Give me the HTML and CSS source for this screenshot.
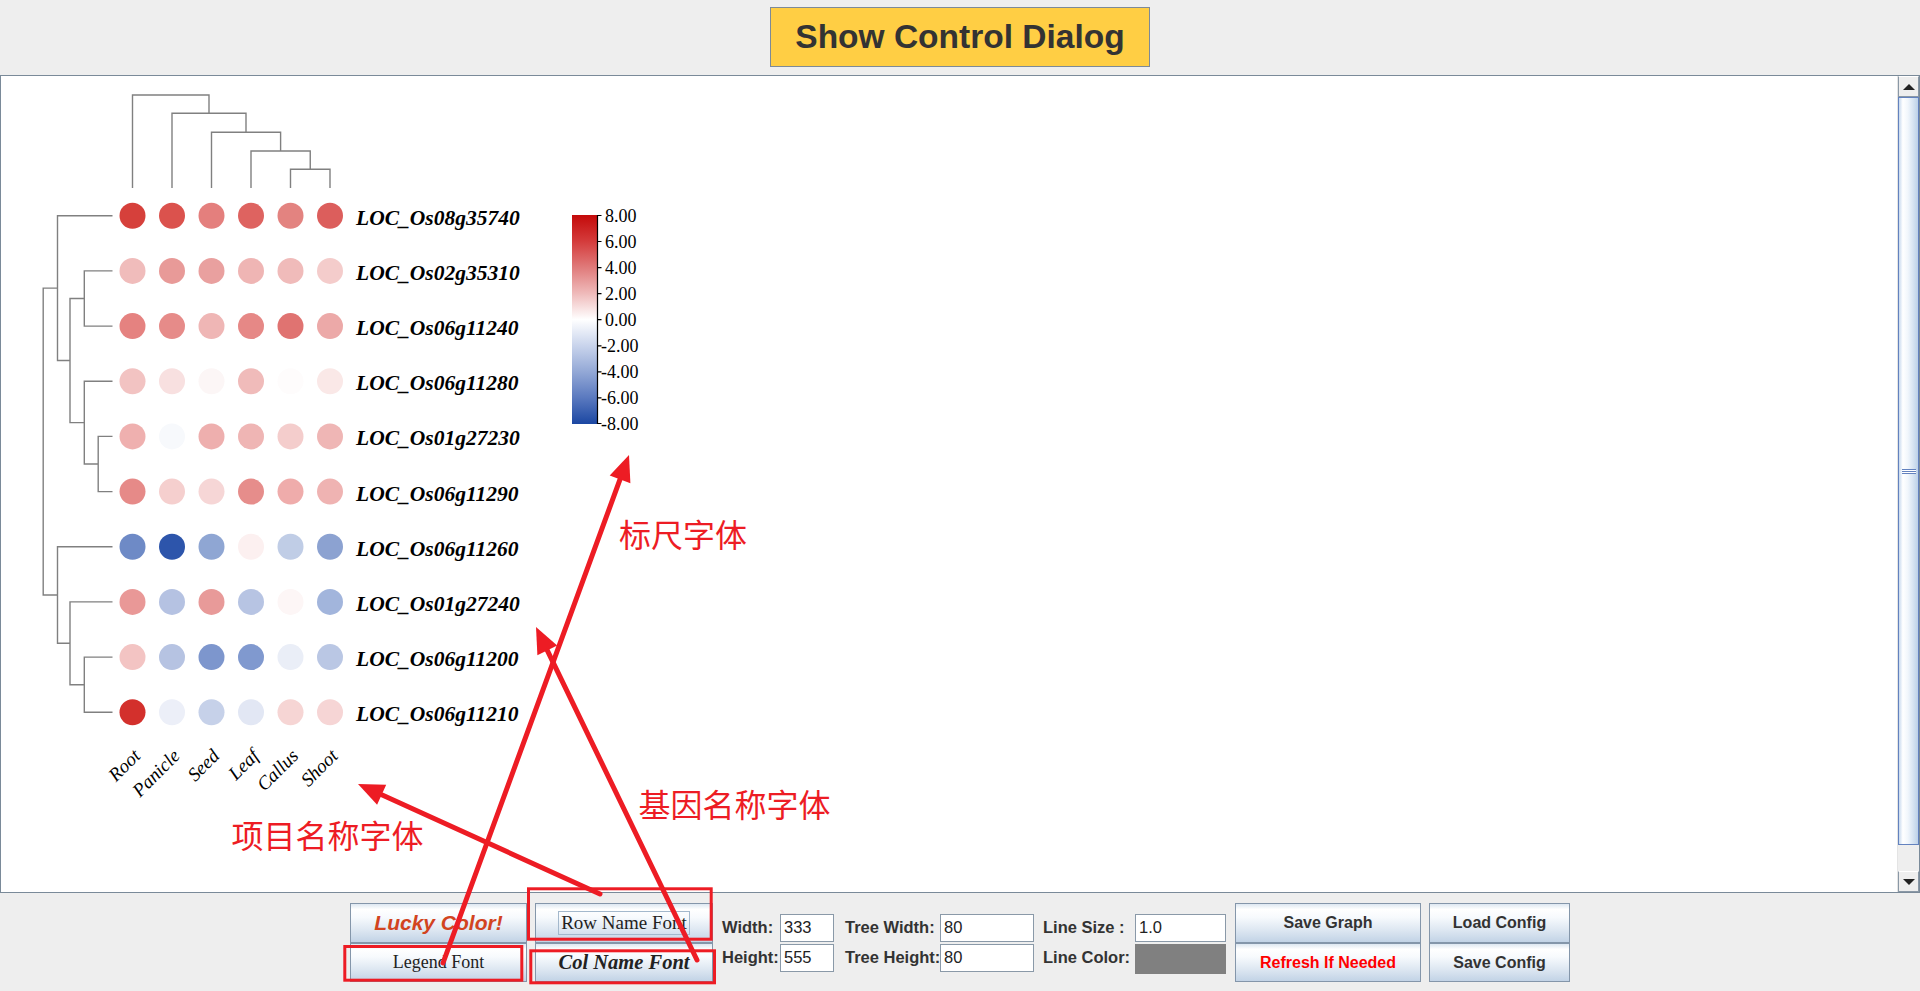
FILE: index.html
```html
<!DOCTYPE html>
<html>
<head>
<meta charset="utf-8">
<link rel="stylesheet" href="styles.css">
</head>
<body>
<div class="app">
  <div class="topbar">
    <button class="show-btn">Show Control Dialog</button>
  </div>

  <div class="panel">
    <div class="canvas">
      <svg class="plot" width="700" height="780" viewBox="1 76 700 780">
        <g class="tree">
          <path d="M132.5 188V95H209V113.3M172 188V113.3H246V132.3M211.5 188V132.3H280.6V151M251 188V151H310.25V169.3M290.5 188V169.3H330V188"/>
          <path d="M57.5 288.1H43.2V595.05H57.5M112.5 215.7H57.5V360.55H70M84.3 298.5H70V422.6H84.3M112.5 270.9H84.3V326.1H112.5M112.5 381.2H84.3V464H98.2M112.5 436.4H98.2V491.6H112.5M112.5 546.8H57.5V643.3H70M112.5 601.9H70V684.7H84.3M112.5 657.1H84.3V712.3H112.5"/>
        </g>
        <g class="dots">
          <circle cx="132.5" cy="215.7" r="13" fill="#d6403b"/><circle cx="172" cy="215.7" r="13" fill="#db524d"/><circle cx="211.5" cy="215.7" r="13" fill="#e47f7d"/><circle cx="251" cy="215.7" r="13" fill="#de6360"/><circle cx="290.5" cy="215.7" r="13" fill="#e38380"/><circle cx="330" cy="215.7" r="13" fill="#dc5e5c"/>
          <circle cx="132.5" cy="270.9" r="13" fill="#f0bcbb"/><circle cx="172" cy="270.9" r="13" fill="#e89a98"/><circle cx="211.5" cy="270.9" r="13" fill="#e9a09f"/><circle cx="251" cy="270.9" r="13" fill="#efb5b4"/><circle cx="290.5" cy="270.9" r="13" fill="#f0bbba"/><circle cx="330" cy="270.9" r="13" fill="#f4cccb"/>
          <circle cx="132.5" cy="326.1" r="13" fill="#e58280"/><circle cx="172" cy="326.1" r="13" fill="#e68b89"/><circle cx="211.5" cy="326.1" r="13" fill="#efb6b5"/><circle cx="251" cy="326.1" r="13" fill="#e68886"/><circle cx="290.5" cy="326.1" r="13" fill="#e07371"/><circle cx="330" cy="326.1" r="13" fill="#eca9a8"/>
          <circle cx="132.5" cy="381.2" r="13" fill="#f2c3c2"/><circle cx="172" cy="381.2" r="13" fill="#f8e0e0"/><circle cx="211.5" cy="381.2" r="13" fill="#fcf6f6"/><circle cx="251" cy="381.2" r="13" fill="#f0bbba"/><circle cx="290.5" cy="381.2" r="13" fill="#fefcfc"/><circle cx="330" cy="381.2" r="13" fill="#fae8e7"/>
          <circle cx="132.5" cy="436.4" r="13" fill="#efb0af"/><circle cx="172" cy="436.4" r="13" fill="#f7f9fc"/><circle cx="211.5" cy="436.4" r="13" fill="#eeafae"/><circle cx="251" cy="436.4" r="13" fill="#efb5b4"/><circle cx="290.5" cy="436.4" r="13" fill="#f4cdcc"/><circle cx="330" cy="436.4" r="13" fill="#efb6b5"/>
          <circle cx="132.5" cy="491.6" r="13" fill="#e68a88"/><circle cx="172" cy="491.6" r="13" fill="#f5cfce"/><circle cx="211.5" cy="491.6" r="13" fill="#f6d6d6"/><circle cx="251" cy="491.6" r="13" fill="#e68d8b"/><circle cx="290.5" cy="491.6" r="13" fill="#efacab"/><circle cx="330" cy="491.6" r="13" fill="#efb3b2"/>
          <circle cx="132.5" cy="546.8" r="13" fill="#6e8ac6"/><circle cx="172" cy="546.8" r="13" fill="#2d55ab"/><circle cx="211.5" cy="546.8" r="13" fill="#8fa6d3"/><circle cx="251" cy="546.8" r="13" fill="#fcf0f0"/><circle cx="290.5" cy="546.8" r="13" fill="#c0cde6"/><circle cx="330" cy="546.8" r="13" fill="#8ca2d1"/>
          <circle cx="132.5" cy="601.9" r="13" fill="#e99897"/><circle cx="172" cy="601.9" r="13" fill="#b5c2e2"/><circle cx="211.5" cy="601.9" r="13" fill="#e89a99"/><circle cx="251" cy="601.9" r="13" fill="#b7c4e3"/><circle cx="290.5" cy="601.9" r="13" fill="#fdf6f6"/><circle cx="330" cy="601.9" r="13" fill="#a2b5dc"/>
          <circle cx="132.5" cy="657.1" r="13" fill="#f3c4c3"/><circle cx="172" cy="657.1" r="13" fill="#b6c3e2"/><circle cx="211.5" cy="657.1" r="13" fill="#7d96cd"/><circle cx="251" cy="657.1" r="13" fill="#8099cf"/><circle cx="290.5" cy="657.1" r="13" fill="#eaeef7"/><circle cx="330" cy="657.1" r="13" fill="#bac7e4"/>
          <circle cx="132.5" cy="712.3" r="13" fill="#d3302c"/><circle cx="172" cy="712.3" r="13" fill="#eceff8"/><circle cx="211.5" cy="712.3" r="13" fill="#c6d1e9"/><circle cx="251" cy="712.3" r="13" fill="#e2e7f4"/><circle cx="290.5" cy="712.3" r="13" fill="#f6d5d4"/><circle cx="330" cy="712.3" r="13" fill="#f6d5d5"/>
        </g>
        <g class="rownames">
          <text x="356" y="224.7">LOC_Os08g35740</text>
          <text x="356" y="279.9">LOC_Os02g35310</text>
          <text x="356" y="335.1">LOC_Os06g11240</text>
          <text x="356" y="390.2">LOC_Os06g11280</text>
          <text x="356" y="445.4">LOC_Os01g27230</text>
          <text x="356" y="500.6">LOC_Os06g11290</text>
          <text x="356" y="555.8">LOC_Os06g11260</text>
          <text x="356" y="610.9">LOC_Os01g27240</text>
          <text x="356" y="666.1">LOC_Os06g11200</text>
          <text x="356" y="721.3">LOC_Os06g11210</text>
        </g>
        <g class="colnames">
          <text transform="translate(141.5 757) rotate(-45)">Root</text>
          <text transform="translate(181 757) rotate(-45)">Panicle</text>
          <text transform="translate(220.5 757) rotate(-45)">Seed</text>
          <text transform="translate(260 757) rotate(-45)">Leaf</text>
          <text transform="translate(299.5 757) rotate(-45)">Callus</text>
          <text transform="translate(339 757) rotate(-45)">Shoot</text>
        </g>
        <defs>
          <linearGradient id="scale" x1="0" y1="0" x2="0" y2="1">
            <stop offset="0" stop-color="#c40a0a"/>
            <stop offset="0.125" stop-color="#d43b3b"/>
            <stop offset="0.25" stop-color="#e07a7a"/>
            <stop offset="0.375" stop-color="#efbaba"/>
            <stop offset="0.5" stop-color="#ffffff"/>
            <stop offset="0.625" stop-color="#c9d4ec"/>
            <stop offset="0.75" stop-color="#93a8d6"/>
            <stop offset="0.875" stop-color="#5a79bf"/>
            <stop offset="1" stop-color="#1b47a2"/>
          </linearGradient>
        </defs>
        <g class="legend">
          <rect x="572" y="215" width="25" height="209" fill="url(#scale)"/>
          <path class="axis" d="M597.5 215V424M597 215.5H601.5M597 241.5H601.5M597 267.6H601.5M597 293.7H601.5M597 319.7H601.5M597 345.8H601.5M597 371.9H601.5M597 397.9H601.5M597 423.5H601.5"/>
          <text x="605" y="221.5">8.00</text>
          <text x="605" y="247.5">6.00</text>
          <text x="605" y="273.6">4.00</text>
          <text x="605" y="299.7">2.00</text>
          <text x="605" y="325.7">0.00</text>
          <text x="601" y="351.8">-2.00</text>
          <text x="601" y="377.9">-4.00</text>
          <text x="601" y="403.9">-6.00</text>
          <text x="601" y="429.5">-8.00</text>
        </g>
      </svg>
    </div>
    <div class="vscroll">
      <div class="sb-btn"><span class="tri-up"></span></div>
      <div class="sb-thumb"><span class="grip"></span></div>
      <div class="sb-track"></div>
      <div class="sb-btn"><span class="tri-down"></span></div>
    </div>
  </div>

  <div class="controls">
    <div class="btn-col col-a">
      <div class="jbtn tall"><span class="lucky">Lucky Color!</span></div>
      <div class="jbtn"><span class="serif">Legend Font</span></div>
    </div>
    <div class="btn-col col-b">
      <div class="jbtn tall"><span class="serif focus">Row Name Font</span></div>
      <div class="jbtn"><span class="serif-bi">Col Name Font</span></div>
    </div>
    <div class="field-grp grp-wh">
      <div class="frow"><span class="flabel">Width:</span><input class="jinput" type="text" value="333"></div>
      <div class="frow"><span class="flabel">Height:</span><input class="jinput" type="text" value="555"></div>
    </div>
    <div class="field-grp grp-tree">
      <div class="frow"><span class="flabel">Tree Width:</span><input class="jinput" type="text" value="80"></div>
      <div class="frow"><span class="flabel">Tree Height:</span><input class="jinput" type="text" value="80"></div>
    </div>
    <div class="field-grp grp-line">
      <div class="frow"><span class="flabel">Line Size :</span><input class="jinput" type="text" value="1.0"></div>
      <div class="frow"><span class="flabel">Line Color:</span><span class="swatch"></span></div>
    </div>
    <div class="btn-col col-save">
      <div class="jbtn tall"><span class="sans">Save Graph</span></div>
      <div class="jbtn"><span class="sans red">Refresh If Needed</span></div>
    </div>
    <div class="btn-col col-cfg">
      <div class="jbtn tall"><span class="sans">Load Config</span></div>
      <div class="jbtn"><span class="sans">Save Config</span></div>
    </div>
  </div>

  <svg class="annot" width="1920" height="991" viewBox="0 0 1920 991">
    <g class="boxes">
      <rect x="528.5" y="888.8" width="182.7" height="50.4"/>
      <rect x="344.8" y="946.5" width="177" height="33.7"/>
      <rect x="530.8" y="950.8" width="183.7" height="32"/>
    </g>
    <g class="arrows">
      <line x1="443" y1="963" x2="620" y2="479.4"/>
      <polygon points="629,455 630.4,483.2 609.7,475.6"/>
      <line x1="697" y1="960" x2="547.3" y2="650.4"/>
      <polygon points="536,627 557.2,645.6 537.4,655.2"/>
      <line x1="600" y1="894" x2="381.7" y2="794.8"/>
      <polygon points="358,784 386.2,784.8 377.1,804.8"/>
    </g>
    <g class="notes">
      <text x="619" y="547">标尺字体</text>
      <text x="638.5" y="817">基因名称字体</text>
      <text x="231.5" y="848">项目名称字体</text>
    </g>
  </svg>
</div>
</body>
</html>
```

FILE: styles.css
```css
html, body {
  margin: 0;
  padding: 0;
  background: #eeeeee;
}

.app {
  position: relative;
  width: 1920px;
  height: 991px;
  overflow: hidden;
  font-family: "Liberation Sans", Arial, sans-serif;
}

/* top bar */
.topbar {
  height: 75px;
  box-sizing: border-box;
  padding-top: 7px;
  display: flex;
  justify-content: center;
  align-items: flex-start;
}

.show-btn {
  width: 380px;
  height: 60px;
  margin: 0;
  padding: 0;
  box-sizing: border-box;
  background: #ffce44;
  border: 1px solid #7d8a97;
  font-family: "Liberation Sans", Arial, sans-serif;
  font-weight: bold;
  font-size: 33.5px;
  color: #333333;
}

/* drawing panel */
.panel {
  height: 818px;
  box-sizing: border-box;
  border: 1px solid #7a8a99;
  display: flex;
  background: #ffffff;
}

.canvas {
  flex: 1;
  background: #ffffff;
  border-right: 1px solid #e4e4e4;
  overflow: hidden;
}

.plot {
  display: block;
}

.tree path {
  fill: none;
  stroke: #808080;
  stroke-width: 1.4;
}

.rownames text {
  font-family: "Liberation Serif", "Times New Roman", serif;
  font-weight: bold;
  font-style: italic;
  font-size: 21.5px;
  fill: #000000;
}

.colnames text {
  font-family: "Liberation Serif", "Times New Roman", serif;
  font-style: italic;
  font-size: 19px;
  fill: #000000;
  text-anchor: end;
}

.legend .axis {
  fill: none;
  stroke: #000000;
  stroke-width: 1.2;
}

.legend text {
  font-family: "Liberation Serif", "Times New Roman", serif;
  font-size: 18px;
  fill: #000000;
}

/* vertical scrollbar */
.vscroll {
  width: 21px;
  display: flex;
  flex-direction: column;
  background: #eeeeee;
}

.sb-btn {
  height: 21px;
  box-sizing: border-box;
  border: 1px solid #8a98a6;
  border-top-color: #ffffff;
  background: #eeeeee;
  display: flex;
  align-items: center;
  justify-content: center;
}

.tri-up {
  width: 0;
  height: 0;
  border-left: 6px solid transparent;
  border-right: 6px solid transparent;
  border-bottom: 6px solid #222222;
}

.tri-down {
  width: 0;
  height: 0;
  border-left: 6px solid transparent;
  border-right: 6px solid transparent;
  border-top: 6px solid #222222;
}

.sb-thumb {
  height: 748px;
  box-sizing: border-box;
  border: 1px solid #6382bf;
  background: linear-gradient(to right, #c6d8ee 0%, #ffffff 20%, #f2f7fc 45%, #dbe7f4 70%, #bcd1e8 100%);
  display: flex;
  align-items: center;
  justify-content: center;
}

.grip {
  width: 14px;
  height: 5px;
  background: repeating-linear-gradient(to bottom, #6382bf 0, #6382bf 1px, #ffffff 1px, #ffffff 2px);
}

.sb-track {
  flex: 1;
  background: #eeeeee;
}

/* bottom controls */
.controls {
  height: 98px;
  box-sizing: border-box;
  padding-top: 10px;
  display: flex;
  justify-content: center;
  align-items: flex-start;
}

.btn-col {
  display: flex;
  flex-direction: column;
  flex: none;
}

.col-a { width: 177px; }
.col-b { width: 178px; margin-left: 8px; }
.col-save { width: 186px; margin-left: 9px; }
.col-cfg { width: 141px; margin-left: 8px; }

.jbtn {
  height: 39px;
  box-sizing: border-box;
  border: 1px solid #8496aa;
  background: linear-gradient(to bottom, #dde7f1 0%, #ffffff 14%, #f7fafd 35%, #dce6f1 70%, #c2d3e6 100%);
  display: flex;
  align-items: center;
  justify-content: center;
  white-space: nowrap;
}

.jbtn.tall {
  height: 40px;
}

.lucky {
  font-family: "Liberation Sans", Arial, sans-serif;
  font-weight: bold;
  font-style: italic;
  font-size: 21px;
  color: #d2441f;
}

.serif {
  font-family: "Liberation Serif", "Times New Roman", serif;
  font-size: 18px;
  color: #222222;
}

.serif.focus {
  font-size: 19px;
  border: 1px solid #a3b8cc;
  padding: 0 2px;
  line-height: 22px;
}

.serif-bi {
  font-family: "Liberation Serif", "Times New Roman", serif;
  font-weight: bold;
  font-style: italic;
  font-size: 20.5px;
  color: #222222;
}

.sans {
  font-family: "Liberation Sans", Arial, sans-serif;
  font-weight: bold;
  font-size: 16px;
  color: #333333;
}

.sans.red {
  color: #ff0000;
}

.field-grp {
  flex: none;
  height: 79px;
  display: flex;
  flex-direction: column;
  justify-content: center;
  gap: 2px;
}

.grp-wh { margin-left: 9px; }
.grp-tree { margin-left: 11px; }
.grp-line { margin-left: 9px; }

.frow {
  display: flex;
  align-items: center;
  height: 28px;
}

.flabel {
  flex: none;
  min-width: 0;
  overflow: visible;
  font-family: "Liberation Sans", Arial, sans-serif;
  font-weight: bold;
  font-size: 16.5px;
  color: #333333;
  white-space: nowrap;
}

.grp-wh .flabel { width: 58px; }
.grp-tree .flabel { width: 95px; }
.grp-line .flabel { width: 92px; }

.jinput {
  flex: none;
  box-sizing: border-box;
  height: 28px;
  margin: 0;
  padding: 0 3px;
  border: 1px solid #8a99a8;
  background: #ffffff;
  font-family: "Liberation Sans", Arial, sans-serif;
  font-size: 16.5px;
  color: #222222;
  outline: none;
}

.grp-wh .jinput { width: 54px; }
.grp-tree .jinput { width: 94px; }
.grp-line .jinput { width: 91px; }

.swatch {
  flex: none;
  width: 91px;
  height: 30px;
  margin-top: 2px;
  background: #808080;
}

/* annotation overlay */
.annot {
  position: absolute;
  left: 0;
  top: 0;
  pointer-events: none;
}

.boxes rect {
  fill: none;
  stroke: #ed1c24;
  stroke-width: 3;
}

.arrows line {
  stroke: #ed1c24;
  stroke-width: 5;
  stroke-linecap: round;
}

.arrows polygon {
  fill: #ed1c24;
}

.notes text {
  font-family: "Noto Sans CJK SC", sans-serif;
  font-size: 32px;
  fill: #ed1c24;
}
```
